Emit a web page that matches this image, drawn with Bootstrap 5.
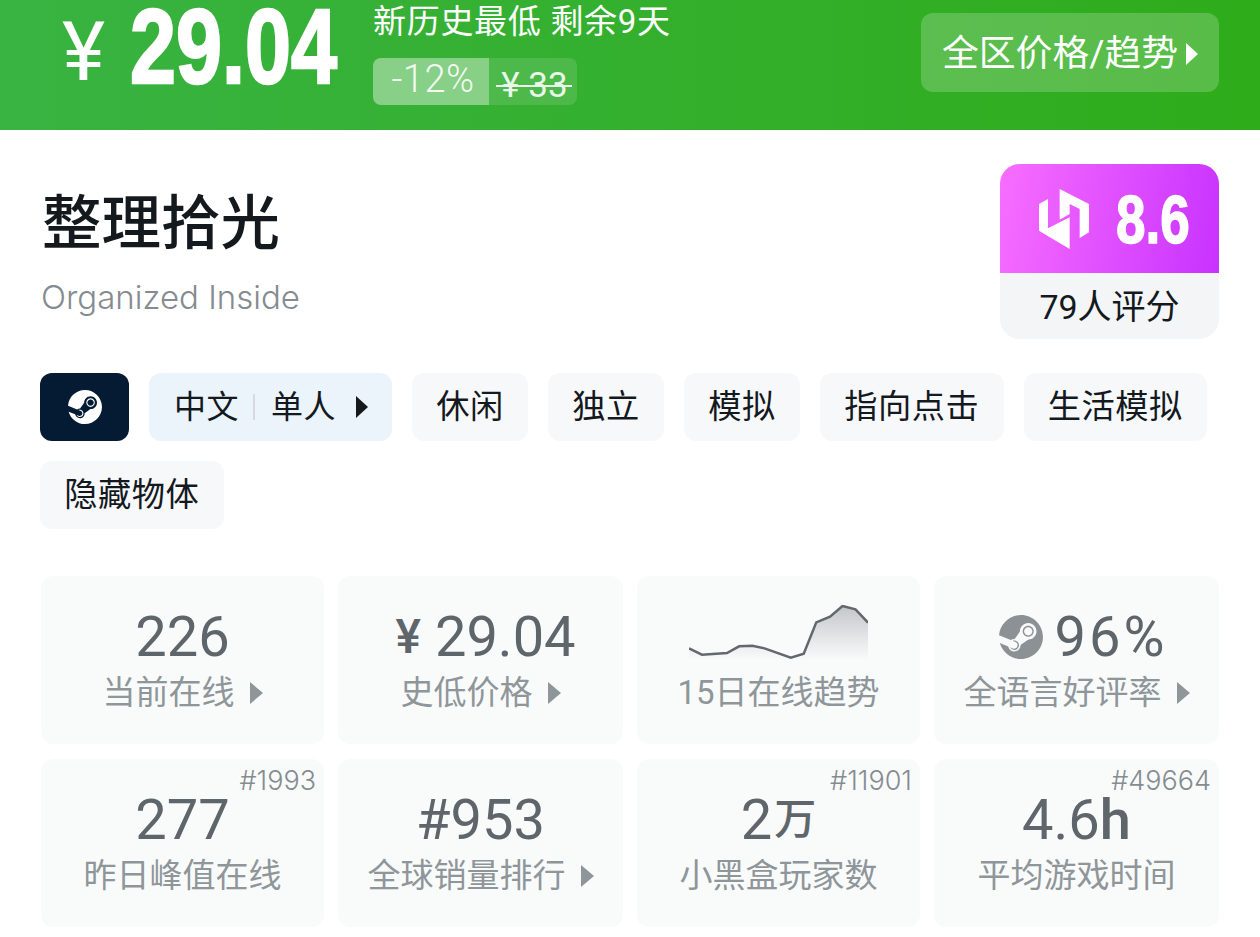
<!DOCTYPE html>
<html lang="zh-CN">
<head>
    <meta charset="UTF-8">
    <meta name="viewport" content="width=device-width, initial-scale=1.0">
    <title>整理拾光</title>
    <link rel="stylesheet" href="https://cdn.jsdelivr.net/npm/bootstrap@5.3.0/dist/css/bootstrap.min.css">
    <script src="https://cdn.jsdelivr.net/npm/bootstrap@5.3.0/dist/js/bootstrap.bundle.min.js"></script>
    <style>
        html, body { height: 937px; overflow: hidden; }
        body {
            background: #fff;
            font-family: Roboto, "Noto Sans CJK SC", sans-serif;
            color: #14191e;
        }
        .price-bar {
            height: 130px;
            padding: 0 41px 0 62px;
            background: linear-gradient(to right, #39b342, #2fac1a);
            color: #fff;
        }
        .yen { font-size: 82px; line-height: 1; width: 68px; margin-top: 11px; }
        .big-price {
            width: 265px;
            margin-right: -22px;
            font-family: "Liberation Sans", sans-serif;
            font-weight: 700;
            font-size: 106px;
            line-height: 92px;
            -webkit-text-stroke: 2.5px #fff;
            transform: scaleX(.78);
            transform-origin: left top;
            white-space: nowrap;
        }
        .low-note { font-size: 33px; line-height: 44px; letter-spacing: .7px; white-space: nowrap; }
        .off-tag { height: 47px; border-radius: 8px; overflow: hidden; margin-top: 14px; background: rgba(255,255,255,.12); width: 204px; }
        .off-pct { width: 116px; padding-left: 4px; background: rgba(255,255,255,.33); font-size: 38px; font-weight: 300; letter-spacing: .5px; line-height: 42px; text-align: center; color: rgba(255,255,255,.92); }
        .off-old { flex: 1; position: relative; padding-left: 3px; font-size: 35px; line-height: 55px; text-align: center; color: #e9f7ea; }
        .off-old::after { content: ""; position: absolute; left: 7px; right: 5px; top: 27px; height: 2px; background: #e9f7ea; }
        .region-btn {
            width: 298px; height: 79px; margin-top: 13px; padding-top: 3px;
            border-radius: 12px;
            background: rgba(255,255,255,.2);
            font-size: 36.8px;
            color: #fff;
        }
        .tri { display: inline-block; width: 0; height: 0; border-style: solid; border-width: 11px 0 11px 12px; border-color: transparent transparent transparent currentColor; }
        .head-box { padding: 34px 41px 0 42px; height: 243px; }
        .game-title { font-size: 59.5px; font-weight: 500; line-height: 60px; margin: 30px 0 0; }
        .game-sub { font-size: 33px; font-weight: 300; line-height: 40px; color: #858b90; margin-top: 23px; margin-left: -1px; font-family: Inter, sans-serif; }
        .score-box { width: 219px; height: 175px; border-radius: 20px; overflow: hidden; background: #f3f5f7; }
        .score-top { height: 109px; padding-left: 39px; gap: 27px; background: linear-gradient(100deg, #f86eff, #c832ff); color: #fff; }
        .score-num { width: 95px; margin-right: -21px; font-family: "Liberation Sans", sans-serif; font-weight: 700; font-size: 68px; line-height: 1; -webkit-text-stroke: 1.5px #fff; transform: scaleX(.78); transform-origin: left center; }
        .score-count { height: 66px; font-size: 34px; padding-top: 2px; }
        .tag-wrap { padding: 0 40px; gap: 20px; height: 203px; align-content: flex-start; }
        .tag-item { height: 68px; padding: 0 24.25px; border-radius: 12px; background: #f7f8fa; font-size: 33.25px; letter-spacing: .5px; white-space: nowrap; }
        .tag-steam { width: 89px; padding: 0; background: #051b33; }
        .tag-lang { background: #ebf3fb; width: 243px; padding-left: 25px; font-size: 32px; }
        .tag-line { width: 2px; height: 26px; background: #d5dade; margin: 0 16px 0 14px; }
        .stat-grid { display: grid; grid-template-columns: 283px 285px 283px 285px; gap: 15px 14px; padding-left: 41px; }
        .stat-cell { height: 168px; border-radius: 12px; background: #f9fbfb; position: relative; color: #8f969a; padding-top: 33px; }
        .stat-num { font-size: 56px; line-height: 56px; color: #5f666b; display: flex; justify-content: center; align-items: center; height: 56px; white-space: nowrap; }
        .stat-label { font-size: 33px; line-height: 44px; margin-top: 6px; white-space: nowrap; }
        .stat-label .tri { border-width: 11px 0 11px 13px; margin-left: 15px; }
        .stat-rank { position: absolute; top: 4px; right: 8px; font-family: Inter, sans-serif; font-weight: 300; font-size: 27px; line-height: 36px; color: #858c91; }
        .yen-small { font-size: 48px; font-weight: 500; margin-right: 14px; }
        .price-stat { padding-left: 10px; }
        .wan-small { font-size: 42px; font-weight: 500; margin-left: 2px; }
        .h-bold { font-weight: 500; }
        .spark { margin-top: -10px; }
        .steam-stat { padding-left: 13px; gap: 12px; letter-spacing: 3px; }
    </style>
</head>
<body>
<div class="price-bar d-flex align-items-start">
    <div class="yen">¥</div>
    <div class="big-price">29.04</div>
    <div>
        <div class="low-note">新历史最低 剩余9天</div>
        <div class="off-tag d-flex">
            <div class="off-pct">-12%</div>
            <div class="off-old">¥ 33</div>
        </div>
    </div>
    <div class="region-btn ms-auto d-flex align-items-center justify-content-center gap-2">
        <span>全区价格/趋势</span><span class="tri"></span>
    </div>
</div>

<div class="head-box d-flex justify-content-between align-items-start">
    <div>
        <h1 class="game-title">整理拾光</h1>
        <div class="game-sub">Organized Inside</div>
    </div>
    <div class="score-box">
        <div class="score-top d-flex align-items-center">
            <svg width="50" height="60" viewBox="0 0 150 180"><path fill="#fff" d="M62 0 150 45V130L122 147V60L92 45V75L62 92ZM0 45 27 30V118L92 85V180L0 125Z"/></svg>
            <div class="score-num">8.6</div>
        </div>
        <div class="score-count d-flex align-items-center justify-content-center">79人评分</div>
    </div>
</div>

<div class="tag-wrap d-flex flex-wrap">
    <div class="tag-item tag-steam d-flex align-items-center justify-content-center">
        <svg width="34" height="34" viewBox="0 0 24 24"><path fill="#fff" d="M11.979 0C5.678 0 .511 4.86.022 11.037l6.432 2.658c.545-.371 1.203-.59 1.912-.59.063 0 .125.004.188.006l2.861-4.142V8.91c0-2.495 2.028-4.524 4.524-4.524 2.494 0 4.524 2.031 4.524 4.527s-2.03 4.525-4.524 4.525h-.105l-4.076 2.911c0 .052.004.105.004.159 0 1.875-1.515 3.396-3.39 3.396-1.635 0-3.016-1.173-3.331-2.727L.436 15.27C1.862 20.307 6.486 24 11.979 24c6.627 0 11.999-5.373 11.999-12S18.605 0 11.979 0zM7.54 18.21l-1.473-.61c.262.543.714.999 1.314 1.25 1.297.539 2.793-.076 3.332-1.375.263-.63.264-1.319.005-1.949s-.75-1.121-1.377-1.383c-.624-.26-1.29-.249-1.878-.03l1.523.63c.956.4 1.409 1.5 1.009 2.455-.397.957-1.497 1.41-2.454 1.012H7.54zm11.415-9.303c0-1.662-1.353-3.015-3.015-3.015-1.665 0-3.015 1.353-3.015 3.015 0 1.665 1.35 3.015 3.015 3.015 1.663 0 3.015-1.35 3.015-3.015zm-5.273-.005c0-1.252 1.013-2.266 2.265-2.266 1.249 0 2.266 1.014 2.266 2.266 0 1.251-1.017 2.265-2.266 2.265-1.253 0-2.265-1.014-2.265-2.265z"/></svg>
    </div>
    <div class="tag-item tag-lang d-flex align-items-center">中文<span class="tag-line"></span>单人<span class="tri ms-auto"></span></div>
    <div class="tag-item d-flex align-items-center">休闲</div>
    <div class="tag-item d-flex align-items-center">独立</div>
    <div class="tag-item d-flex align-items-center">模拟</div>
    <div class="tag-item d-flex align-items-center">指向点击</div>
    <div class="tag-item d-flex align-items-center">生活模拟</div>
    <div class="tag-item d-flex align-items-center">隐藏物体</div>
</div>

<div class="stat-grid">
    <div class="stat-cell text-center">
        <div class="stat-num">226</div>
        <div class="stat-label">当前在线<span class="tri"></span></div>
    </div>
    <div class="stat-cell text-center">
        <div class="stat-num price-stat"><span class="yen-small">¥</span>29.04</div>
        <div class="stat-label">史低价格<span class="tri"></span></div>
    </div>
    <div class="stat-cell text-center">
        <div class="stat-num">
            <svg class="spark" width="179" height="55" viewBox="148 100 443 165" preserveAspectRatio="none"><defs><linearGradient id="spark" x1="0" y1="0" x2="0" y2="1"><stop offset="0" stop-color="#c4c7ca"/><stop offset="1" stop-color="#f9fbfb"/></linearGradient></defs><path fill="url(#spark)" d="M148 230 180 249 242 244 272 224 305 222 335 230 400 258 432 246 463 152 497 135 528 103 560 113 591 153V265H148Z"/><path fill="none" stroke="#62686d" stroke-width="2.5" vector-effect="non-scaling-stroke" d="M148 230 180 249 242 244 272 224 305 222 335 230 400 258 432 246 463 152 497 135 528 103 560 113 591 153"/></svg>
        </div>
        <div class="stat-label">15日在线趋势</div>
    </div>
    <div class="stat-cell text-center">
        <div class="stat-num steam-stat">
            <svg width="44" height="44" viewBox="0 0 24 24"><path fill="#8b9195" d="M11.979 0C5.678 0 .511 4.86.022 11.037l6.432 2.658c.545-.371 1.203-.59 1.912-.59.063 0 .125.004.188.006l2.861-4.142V8.91c0-2.495 2.028-4.524 4.524-4.524 2.494 0 4.524 2.031 4.524 4.527s-2.03 4.525-4.524 4.525h-.105l-4.076 2.911c0 .052.004.105.004.159 0 1.875-1.515 3.396-3.39 3.396-1.635 0-3.016-1.173-3.331-2.727L.436 15.27C1.862 20.307 6.486 24 11.979 24c6.627 0 11.999-5.373 11.999-12S18.605 0 11.979 0zM7.54 18.21l-1.473-.61c.262.543.714.999 1.314 1.25 1.297.539 2.793-.076 3.332-1.375.263-.63.264-1.319.005-1.949s-.75-1.121-1.377-1.383c-.624-.26-1.29-.249-1.878-.03l1.523.63c.956.4 1.409 1.5 1.009 2.455-.397.957-1.497 1.41-2.454 1.012H7.54zm11.415-9.303c0-1.662-1.353-3.015-3.015-3.015-1.665 0-3.015 1.353-3.015 3.015 0 1.665 1.35 3.015 3.015 3.015 1.663 0 3.015-1.35 3.015-3.015zm-5.273-.005c0-1.252 1.013-2.266 2.265-2.266 1.249 0 2.266 1.014 2.266 2.266 0 1.251-1.017 2.265-2.266 2.265-1.253 0-2.265-1.014-2.265-2.265z"/></svg>
            96%
        </div>
        <div class="stat-label">全语言好评率<span class="tri"></span></div>
    </div>
    <div class="stat-cell text-center">
        <div class="stat-rank">#1993</div>
        <div class="stat-num">277</div>
        <div class="stat-label">昨日峰值在线</div>
    </div>
    <div class="stat-cell text-center">
        <div class="stat-num">#953</div>
        <div class="stat-label">全球销量排行<span class="tri"></span></div>
    </div>
    <div class="stat-cell text-center">
        <div class="stat-rank">#11901</div>
        <div class="stat-num">2<span class="wan-small">万</span></div>
        <div class="stat-label">小黑盒玩家数</div>
    </div>
    <div class="stat-cell text-center">
        <div class="stat-rank">#49664</div>
        <div class="stat-num">4.6<span class="h-bold">h</span></div>
        <div class="stat-label">平均游戏时间</div>
    </div>
</div>
</body>
</html>
